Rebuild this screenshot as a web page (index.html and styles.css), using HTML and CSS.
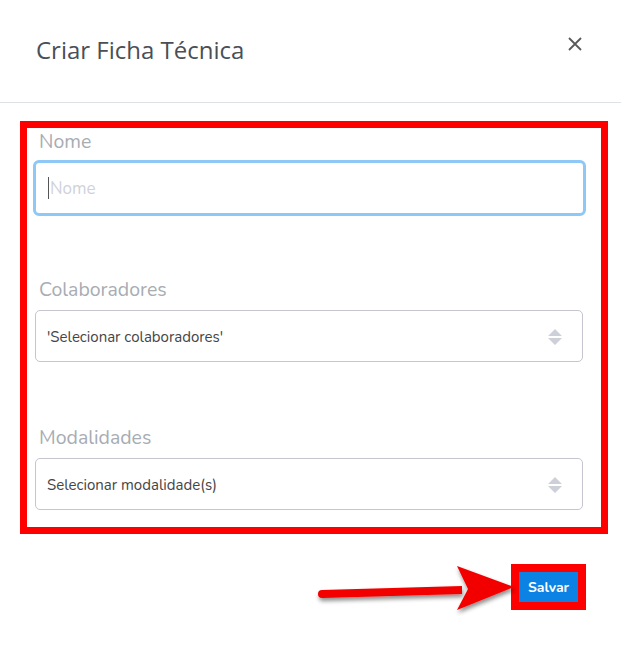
FILE: index.html
```html
<!DOCTYPE html>
<html lang="pt-BR">
<head>
    <meta charset="UTF-8">
    <meta name="viewport" content="width=device-width, initial-scale=1.0">
    <title>Criar Ficha Técnica</title>
    <link rel="stylesheet" href="styles.css">
</head>
<body>
    <div class="modal">
        <header class="modal-header">
            <h1>Criar Ficha Técnica</h1>
            <button class="close" type="button" aria-label="Fechar">
                <svg width="14" height="14" viewBox="0 0 14 14"><path d="M1 1L13 13M13 1L1 13" stroke="#5a5a5a" stroke-width="1.8" fill="none"/></svg>
            </button>
        </header>
        <div class="modal-body">
            <div class="highlight">
                <div class="form-group first">
                    <label for="nome">Nome</label>
                    <div class="input-wrap">
                        <span class="cursor"></span>
                        <input type="text" id="nome" class="input-focus" placeholder="Nome">
                    </div>
                </div>
                <div class="form-group">
                    <label>Colaboradores</label>
                    <div class="select">
                        <span>'Selecionar colaboradores'</span>
                        <svg class="caret" width="16" height="18" viewBox="0 0 16 18"><path d="M8 1L15 8H1Z M1 10H15L8 17Z" fill="#cdd0d8"/></svg>
                    </div>
                </div>
                <div class="form-group last">
                    <label>Modalidades</label>
                    <div class="select">
                        <span>Selecionar modalidade(s)</span>
                        <svg class="caret" width="16" height="18" viewBox="0 0 16 18"><path d="M8 1L15 8H1Z M1 10H15L8 17Z" fill="#cdd0d8"/></svg>
                    </div>
                </div>
            </div>
        </div>
        <footer class="modal-footer">
            <div class="btn-mark">
                <button class="btn-primary" type="button">Salvar</button>
            </div>
        </footer>
        <svg class="arrow" width="220" height="60" viewBox="0 0 220 60">
            <defs>
                <filter id="sh" x="-10%" y="-30%" width="130%" height="170%">
                    <feDropShadow dx="1" dy="3" stdDeviation="2" flood-color="#000" flood-opacity="0.45"/>
                </filter>
            </defs>
            <g filter="url(#sh)" fill="#f20000">
                <path d="M20 28 L160 24 L160 32 L20 36 Z"/>
                <circle cx="20" cy="32" r="4"/>
                <path d="M155 4 L212 25 L155 48 L166 27 Z"/>
            </g>
        </svg>
    </div>
</body>
</html>
```

FILE: styles.css
```css
body {
    margin: 0;
    background-color: #fff;
    font-family: "Nunito", Lato, "Noto Sans", sans-serif;
}
.modal {
    position: relative;
    width: 621px;
    height: 646px;
    background: #fff;
}
.modal-header {
    height: 103px;
    border-bottom: 1px solid #dee2e6;
    display: flex;
    align-items: center;
    justify-content: space-between;
    padding: 0 36px;
    box-sizing: border-box;
}
.modal-header h1 {
    margin: 0 0 4px 0;
    font-family: "Open Sans", sans-serif;
    font-weight: 400;
    font-size: 24px;
    color: #4a4f55;
}
.close {
    border: none;
    background: none;
    padding: 0;
    margin: 0 3px 14px 0;
    width: 14px;
    height: 14px;
    display: flex;
}
.modal-body {
    padding: 18px 13px 0 20px;
}
.highlight {
    border: 7px solid #ff0000;
    width: 568px;
    padding: 0 0 17px 6px;
}
.form-group.first {
    margin-top: 2px;
}
.form-group label {
    display: block;
    font-size: 19.5px;
    line-height: 24px;
    color: #a8acb3;
    margin-left: 6px;
    margin-bottom: 8px;
}
.form-group.first label {
    margin-bottom: 6px;
}
.input-wrap {
    position: relative;
}
.cursor {
    position: absolute;
    left: 15px;
    top: 17px;
    width: 1px;
    height: 22px;
    background: #555;
}
.input-focus {
    display: block;
    width: 553px;
    height: 56px;
    box-sizing: border-box;
    border: 3px solid #8ec8f6;
    border-radius: 6px;
    padding: 0 14px;
    font-family: inherit;
    font-size: 17px;
    outline: none;
}
.input-focus::placeholder {
    color: #cfd2da;
}
.select {
    margin-left: 2px;
    width: 548px;
    height: 52px;
    box-sizing: border-box;
    border: 1px solid #c6c4cf;
    border-radius: 5px;
    display: flex;
    align-items: center;
    justify-content: space-between;
    padding: 2px 19px 0 11px;
    font-size: 15px;
    color: #454545;
}
.form-group + .form-group {
    margin-top: 62px;
}
.form-group.last {
    margin-top: 64px;
}
.modal-footer {
    display: flex;
    justify-content: flex-end;
    padding: 30px 35px 0 0;
}
.btn-mark {
    border: 8px solid #ff0000;
    display: flex;
}
.btn-primary {
    background-color: #0b82e4;
    color: #fff;
    border: none;
    font-family: inherit;
    font-weight: 700;
    font-size: 14px;
    width: 59px;
    height: 30px;
    padding: 0;
}
.arrow {
    position: absolute;
    left: 302px;
    top: 562px;
}
```
